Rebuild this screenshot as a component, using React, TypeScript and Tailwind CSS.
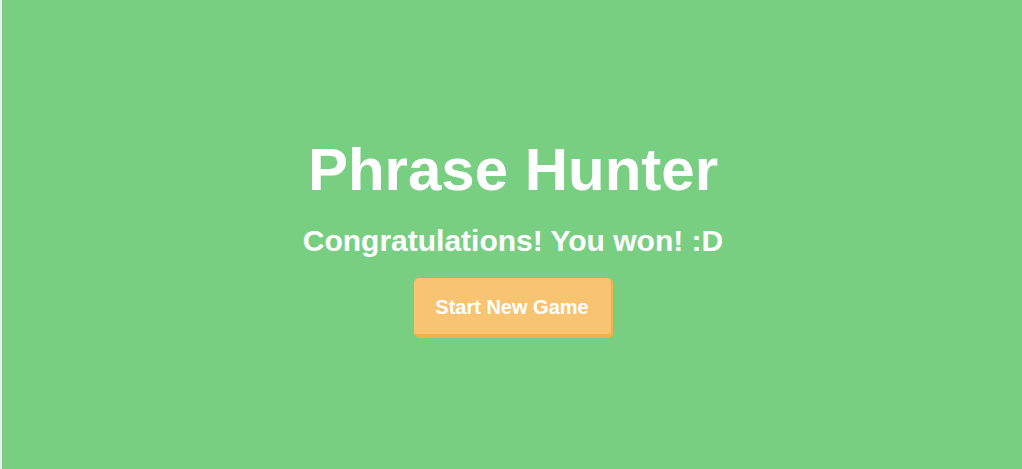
import React from 'react';

const font = { fontFamily: '"Liberation Sans", Arial, sans-serif' };

export default function App() {
  return (
    <div
      className="min-h-[469px] w-full bg-[#78cf82] border-l-2 border-[#ececec] flex flex-col items-center pt-[140px] pl-[2px]"
      style={font}
    >
      {/* Title */}
      <h1 className="text-white font-bold text-[60px] leading-[60px]">Phrase Hunter</h1>

      {/* Result message */}
      <h2 className="mt-[26px] text-white font-bold text-[30px] leading-[30px]">
        Congratulations! You won! :D
      </h2>

      <button
        className="mt-[22px] w-[199px] h-[60px] rounded-[5px] bg-[#f8c471] border-b-4 border-r-2 border-[#f6b043] text-white font-bold text-[20px] leading-[20px] pt-[2px]"
        style={font}
      >
        Start New Game
      </button>
    </div>
  );
}
